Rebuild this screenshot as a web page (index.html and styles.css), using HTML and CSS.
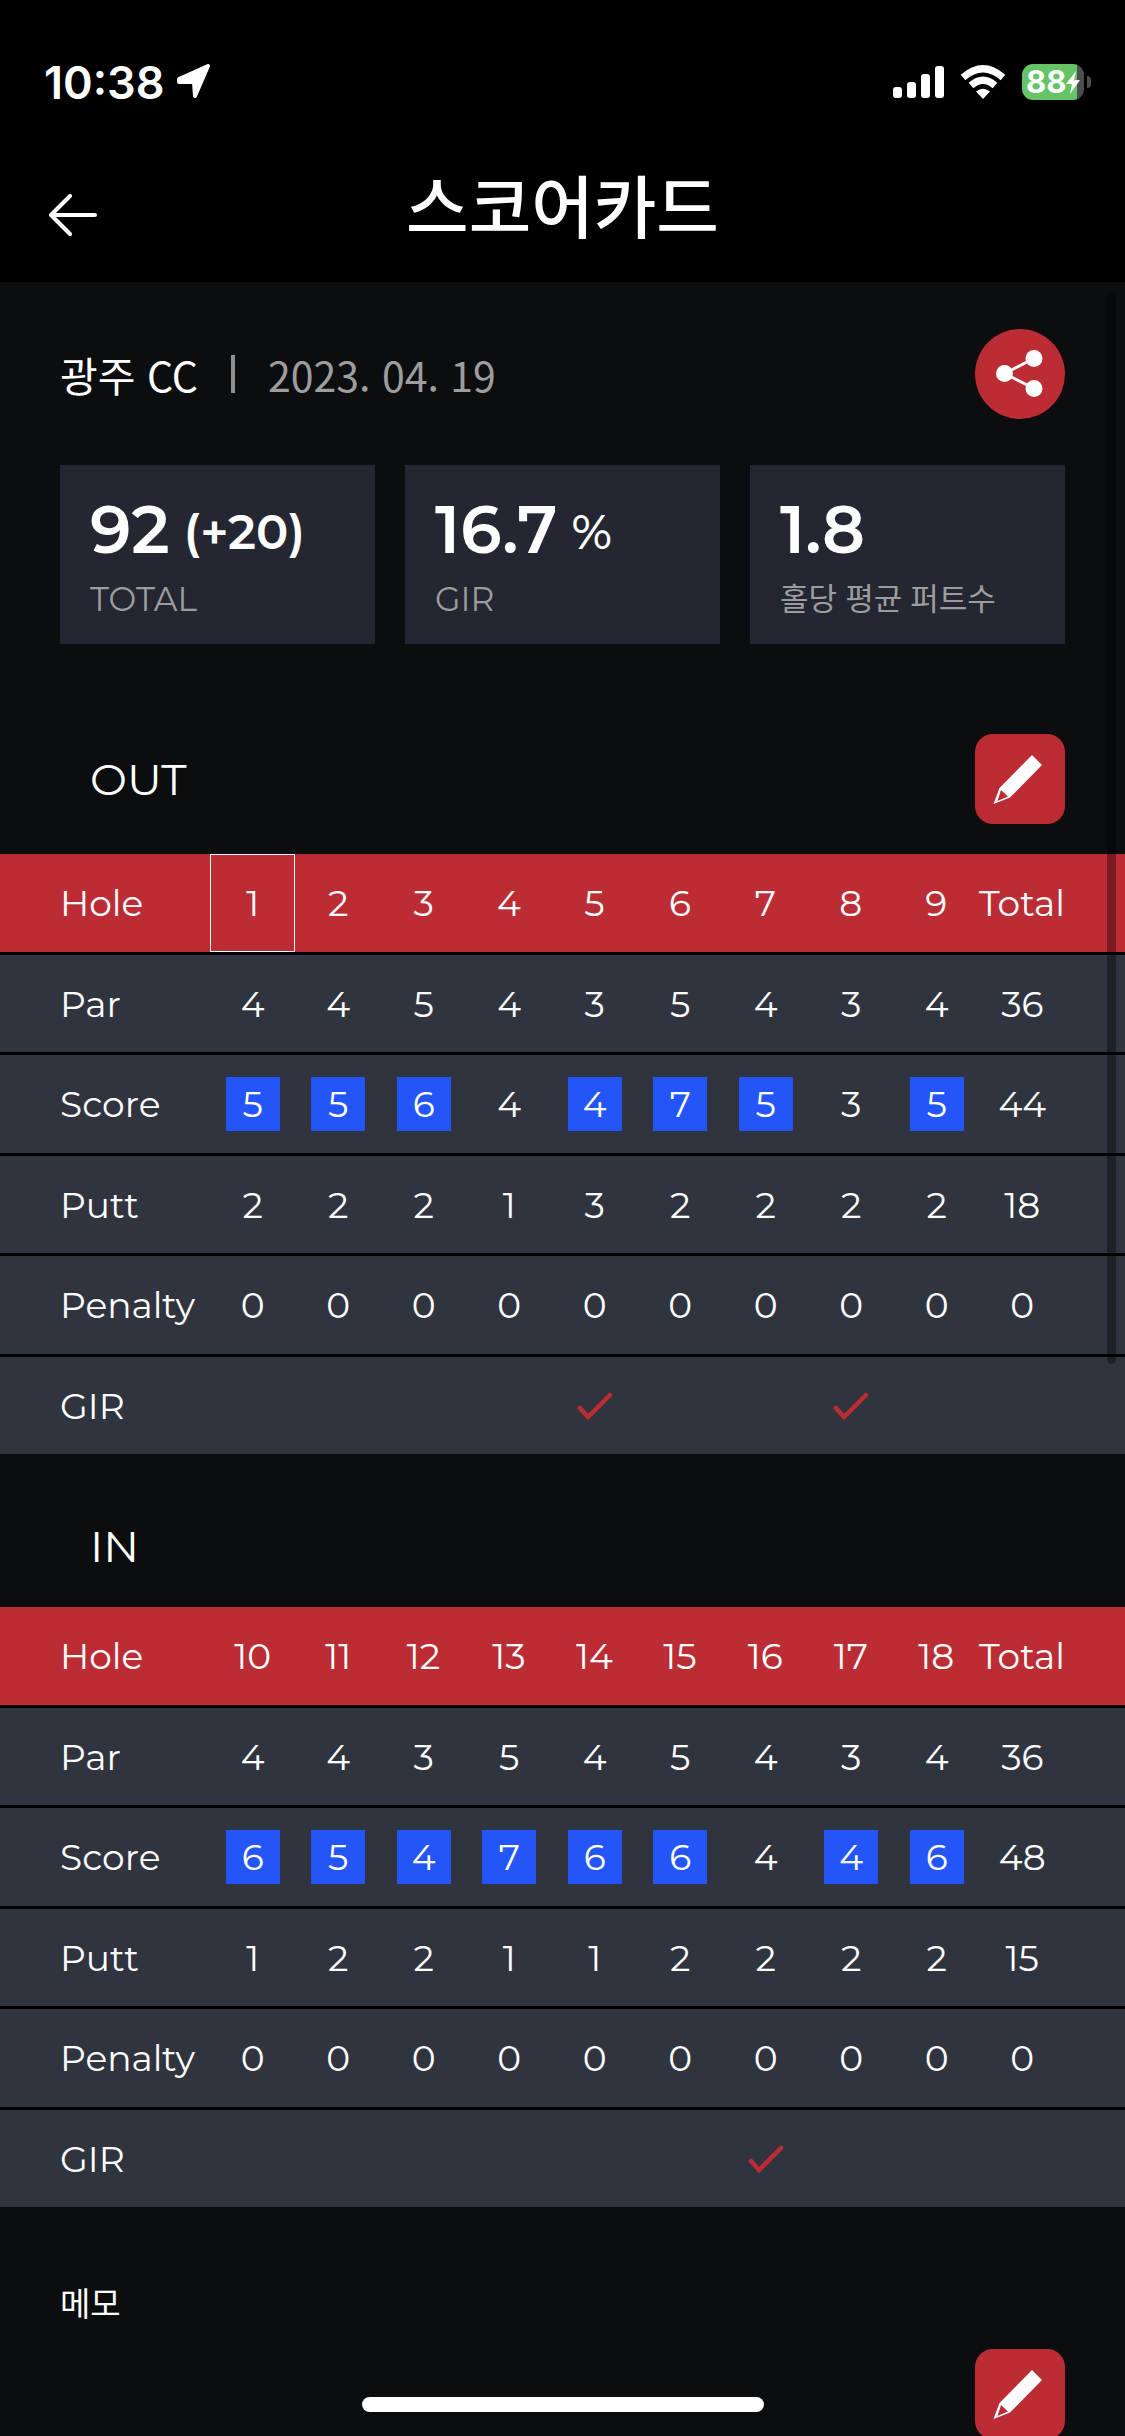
FILE: index.html
```html
<!DOCTYPE html>
<html lang="ko">
<head>
  <meta charset="UTF-8">
  <meta name="viewport" content="width=device-width, initial-scale=1.0">
  <title>스코어카드</title>
  <link rel="stylesheet" href="styles.css">
</head>
<body>

<!-- icons used more than once -->
<svg class="defs" width="0" height="0" aria-hidden="true">
  <symbol id="pencil" viewBox="0 0 90 90">
    <path fill="#fff" fill-rule="evenodd" d="M57 21L67 31L35 63.500L18.500 70L24.500 54ZM26 56L22.500 67L33 62.500Z"/>
  </symbol>
  <symbol id="check" viewBox="0 0 36 28">
    <path d="M3 16L11 25L33 3" fill="none" stroke="#bc2c35" stroke-width="4.500" stroke-linecap="round"/>
  </symbol>
</svg>

<div class="status">
  <span class="time">10:38</span>
  <svg class="location" width="36" height="36" viewBox="0 0 36 36"><path d="M3 15L32 2L19 32L18 18H3Z" fill="#fff" stroke="#fff" stroke-width="4" stroke-linejoin="round"/></svg>
  <div class="status-icons">
    <svg width="51" height="32" viewBox="0 0 51 32" fill="#fff">
      <rect x="0" y="21" width="9" height="11" rx="3"/>
      <rect x="14" y="16" width="9" height="16" rx="3"/>
      <rect x="28" y="8" width="9" height="24" rx="3"/>
      <rect x="42" y="0" width="9" height="32" rx="3"/>
    </svg>
    <svg width="46" height="34" viewBox="0 0 46 34">
      <path d="M3 12.500Q23 -5 43 12.500" fill="none" stroke="#fff" stroke-width="7"/>
      <path d="M11 20.500Q23 10 35 20.500" fill="none" stroke="#fff" stroke-width="7"/>
      <path d="M16 26.500Q23 21 30 26.500L23 34Z" fill="#fff"/>
    </svg>
    <div class="battery">
      <span class="level">88</span>
      <svg class="bolt" width="14" height="23" viewBox="0 0 14 23"><path d="M10 0L0 13H6L4 23L14 9H8Z" fill="#fff"/></svg>
    </div>
  </div>
</div>

<header class="header">
  <button class="back" aria-label="뒤로">
    <svg width="48" height="42" viewBox="0 0 48 42" fill="none" stroke="#fff" stroke-width="4" stroke-linecap="round" stroke-linejoin="round"><path d="M21 2L2 21L21 40M2 21H46"/></svg>
  </button>
  <h1>스코어카드</h1>
</header>

<main class="content">
  <section class="round">
    <span class="club">광주 CC</span>
    <span class="line"></span>
    <time class="date" datetime="2023-04-19">2023. 04. 19</time>
    <button class="btn share" aria-label="공유">
      <svg width="90" height="90" viewBox="0 0 90 90" fill="#fff"><path d="M59 29.500L29.500 44.500L59 59.500" fill="none" stroke="#fff" stroke-width="3"/><circle cx="29.500" cy="44.500" r="8.500"/><circle cx="59" cy="29.500" r="8.500"/><circle cx="59" cy="59.500" r="8.500"/></svg>
    </button>
  </section>

  <section class="stats">
    <div class="card">
      <p class="value">92<span class="diff">(+20)</span></p>
      <p class="name">TOTAL</p>
    </div>
    <div class="card">
      <p class="value">16.7<span class="unit">%</span></p>
      <p class="name">GIR</p>
    </div>
    <div class="card">
      <p class="value">1.8</p>
      <p class="name ko">홀당 평균 퍼트수</p>
    </div>
  </section>

  <div class="course out">
    <h2>OUT</h2>
    <button class="btn edit" aria-label="OUT 수정"><svg width="90" height="90"><use href="#pencil"/></svg></button>
  </div>
  <table class="score">
    <thead>
      <tr><th>Hole</th><th class="on">1</th><th>2</th><th>3</th><th>4</th><th>5</th><th>6</th><th>7</th><th>8</th><th>9</th><th>Total</th></tr>
    </thead>
    <tbody>
      <tr><th>Par</th><td>4</td><td>4</td><td>5</td><td>4</td><td>3</td><td>5</td><td>4</td><td>3</td><td>4</td><td>36</td></tr>
      <tr><th>Score</th><td><b>5</b></td><td><b>5</b></td><td><b>6</b></td><td>4</td><td><b>4</b></td><td><b>7</b></td><td><b>5</b></td><td>3</td><td><b>5</b></td><td>44</td></tr>
      <tr><th>Putt</th><td>2</td><td>2</td><td>2</td><td>1</td><td>3</td><td>2</td><td>2</td><td>2</td><td>2</td><td>18</td></tr>
      <tr><th>Penalty</th><td>0</td><td>0</td><td>0</td><td>0</td><td>0</td><td>0</td><td>0</td><td>0</td><td>0</td><td>0</td></tr>
      <tr><th>GIR</th><td></td><td></td><td></td><td></td><td><svg width="36" height="28"><use href="#check"/></svg></td><td></td><td></td><td><svg width="36" height="28"><use href="#check"/></svg></td><td></td><td></td></tr>
    </tbody>
  </table>

  <div class="course">
    <h2>IN</h2>
  </div>
  <table class="score">
    <thead>
      <tr><th>Hole</th><th>10</th><th>11</th><th>12</th><th>13</th><th>14</th><th>15</th><th>16</th><th>17</th><th>18</th><th>Total</th></tr>
    </thead>
    <tbody>
      <tr><th>Par</th><td>4</td><td>4</td><td>3</td><td>5</td><td>4</td><td>5</td><td>4</td><td>3</td><td>4</td><td>36</td></tr>
      <tr><th>Score</th><td><b>6</b></td><td><b>5</b></td><td><b>4</b></td><td><b>7</b></td><td><b>6</b></td><td><b>6</b></td><td>4</td><td><b>4</b></td><td><b>6</b></td><td>48</td></tr>
      <tr><th>Putt</th><td>1</td><td>2</td><td>2</td><td>1</td><td>1</td><td>2</td><td>2</td><td>2</td><td>2</td><td>15</td></tr>
      <tr><th>Penalty</th><td>0</td><td>0</td><td>0</td><td>0</td><td>0</td><td>0</td><td>0</td><td>0</td><td>0</td><td>0</td></tr>
      <tr><th>GIR</th><td></td><td></td><td></td><td></td><td></td><td></td><td><svg width="36" height="28"><use href="#check"/></svg></td><td></td><td></td><td></td></tr>
    </tbody>
  </table>

  <section class="memo">
    <h3>메모</h3>
    <button class="btn edit" aria-label="메모 수정"><svg width="90" height="90"><use href="#pencil"/></svg></button>
  </section>
</main>

<div class="scrollbar"></div>
<div class="home"></div>

</body>
</html>
```

FILE: styles.css
```css
* {
  box-sizing: border-box;
  margin: 0;
  padding: 0;
}

body {
  display: flex;
  flex-direction: column;
  height: 100vh;
  overflow: hidden;
  background: #0b0d0e;
  color: #fff;
  font-family: Montserrat, Inter, "Noto Sans CJK KR", sans-serif;
}

button {
  border: 0;
  background: none;
  cursor: pointer;
}

svg {
  display: block;
}

.defs {
  position: absolute;
}

/* status bar */
.status {
  display: flex;
  flex: none;
  align-items: center;
  height: 132px;
  padding: 32px 34px 0 44px;
  background: #000;
}

.time {
  font-family: Inter, sans-serif;
  font-size: 45px;
  font-weight: 600;
}

.location {
  margin-left: 11px;
}

.status-icons {
  display: flex;
  align-items: center;
  gap: 16px;
  margin-left: auto;
}

.battery {
  position: relative;
  display: flex;
  align-items: center;
  width: 62px;
  height: 36px;
  margin-right: 7px;
  padding-left: 4px;
  border-radius: 11px;
  background: linear-gradient(to right, #65c466 55px, #4d4d4f 55px);
}

.battery::after {
  content: "";
  position: absolute;
  left: 65px;
  width: 4px;
  height: 12px;
  border-radius: 0 6px 6px 0;
  background: #4d4d4f;
}

.level {
  font-family: Inter, sans-serif;
  font-size: 31px;
  font-weight: 700;
  line-height: 36px;
}

.bolt {
  position: absolute;
  left: 44px;
}

/* title */
.header {
  display: grid;
  grid-template-columns: 48px 1fr 48px;
  flex: none;
  align-items: center;
  height: 150px;
  padding: 0 49px;
  background: #000;
}

.back {
  padding-top: 16px;
}

.header h1 {
  padding-bottom: 6px;
  font-family: "Noto Sans CJK KR", sans-serif;
  font-size: 68px;
  font-weight: 500;
  line-height: 144px;
  text-align: center;
}

/* content */
.content {
  flex: 1;
  min-height: 0;
  overflow: hidden;
}

.btn {
  flex: none;
  width: 90px;
  height: 90px;
  margin-left: auto;
  background: #bc2c35;
}

.share {
  border-radius: 50%;
}

.edit {
  border-radius: 18px;
}

.round {
  display: flex;
  align-items: center;
  padding: 47px 60px 46px;
  font-family: "Noto Sans CJK KR", sans-serif;
  font-size: 41px;
  line-height: 60px;
}

.line {
  width: 4px;
  height: 38px;
  margin: 0 33px;
  background: #8e8e8f;
}

.date {
  color: #9d9d9e;
}

.stats {
  display: grid;
  grid-template-columns: repeat(3, 1fr);
  gap: 30px;
  padding: 0 60px;
}

.card {
  height: 179px;
  padding: 25px 30px 0;
  background: #242631;
}

.value {
  font-size: 66px;
  font-weight: 600;
  line-height: 80px;
  white-space: nowrap;
}

.diff,
.unit {
  margin-left: 14px;
  font-size: 48px;
  line-height: 48px;
  vertical-align: 4px;
}

.unit {
  font-weight: 500;
}

.name {
  color: #9d9d9f;
  font-size: 33px;
  line-height: 58px;
}

.name.ko {
  font-size: 31px;
}

.course {
  display: flex;
  align-items: center;
  padding: 61px 60px 30px 90px;
}

.course.out {
  padding-top: 90px;
}

.course h2 {
  font-size: 44px;
  font-weight: 400;
  line-height: 62px;
}

/* score table */
.score,
.score thead,
.score tbody {
  display: block;
}

.score {
  font-size: 36px;
}

.score tr {
  display: grid;
  grid-template-columns: 210px repeat(10, 1fr);
  height: 101px;
  padding-right: 60px;
  border-bottom: 3px solid #000;
  background: #30343f;
}

.score thead tr {
  background: #bc2c35;
}

.score tbody tr:nth-child(odd) {
  height: 100px;
}

.score tbody tr:last-child {
  height: 97px;
  border-bottom: 0;
}

.score th,
.score td {
  display: flex;
  align-items: center;
  justify-content: center;
  font-weight: 400;
}

.score th:first-child {
  justify-content: flex-start;
  padding-left: 60px;
}

.score .on {
  border: 1px solid #fff;
}

.score b {
  width: 54px;
  background: #2355f8;
  font-weight: 400;
  line-height: 54px;
  text-align: center;
}

.memo {
  display: flex;
  flex-direction: column;
  padding: 73px 60px;
}

.memo h3 {
  margin-bottom: 21px;
  font-size: 33px;
  font-weight: 400;
  line-height: 48px;
}

.scrollbar {
  position: fixed;
  top: 291px;
  right: 9px;
  width: 9px;
  height: 1073px;
  border-radius: 5px;
  background: rgba(0, 0, 0, 0.35);
}

.home {
  position: fixed;
  bottom: 24px;
  left: 50%;
  width: 402px;
  height: 15px;
  border-radius: 8px;
  background: #fff;
  transform: translateX(-50%);
}
```
